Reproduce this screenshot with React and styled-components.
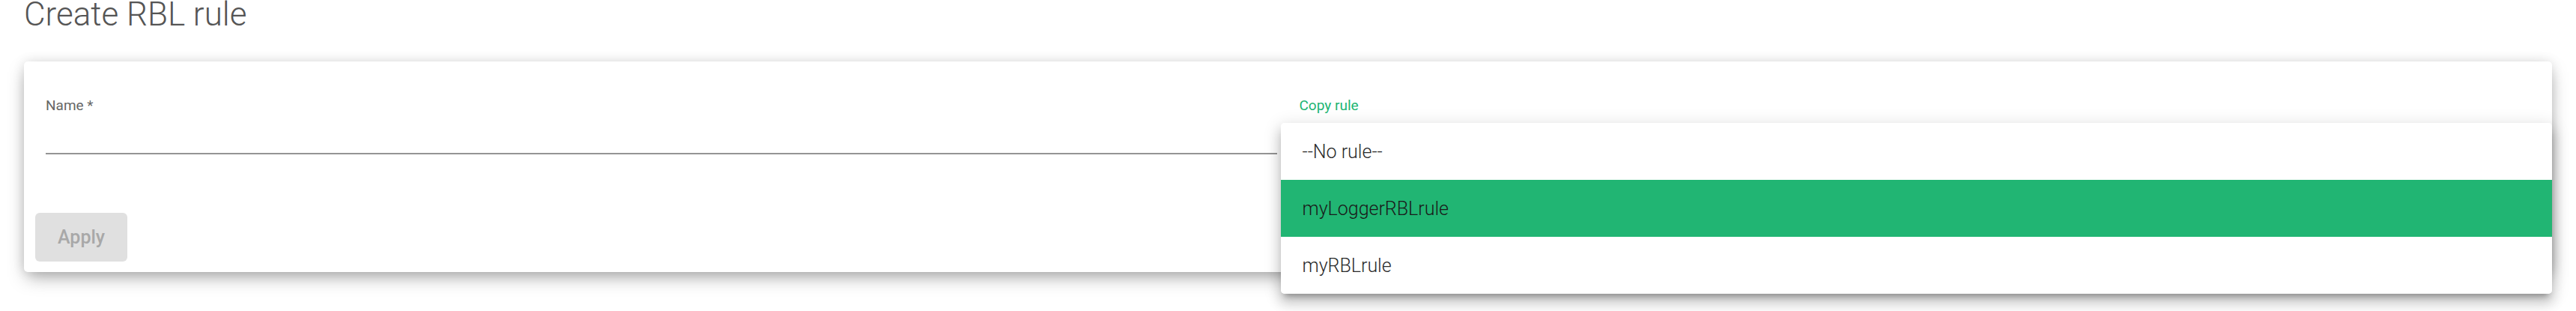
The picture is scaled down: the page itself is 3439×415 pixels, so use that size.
import styled, { createGlobalStyle } from "styled-components";

const GlobalStyle = createGlobalStyle`
  html, body {
    margin:0;
    padding:0;
    background:#fff;
    font-family:Roboto, "Liberation Sans", sans-serif;
  }
`;

const rules = ["--No rule--", "myLoggerRBLrule", "myRBLrule"];

function App() {
  const selected = 1;
  return (
    <Page>
      <GlobalStyle />
      <Title>Create RBL rule</Title>
      <Card>
        <Fields>
          <Field>
            <Label>Name *</Label>
            <Input />
          </Field>
          <Field>
            <Label $active>Copy rule</Label>
            <Input />
            {/* open select panel */}
            <Panel>
              {rules.map((item, idx) => (
                <Option key={idx} $selected={idx === selected}>
                  {item}
                </Option>
              ))}
            </Panel>
          </Field>
        </Fields>
        <Actions>
          <Button disabled>Apply</Button>
        </Actions>
      </Card>
    </Page>
  );
}
export default App;

const Page = styled.div`
  box-sizing:border-box;
  min-height:415px;
  padding:0 32px;
`;
const Title = styled.h1`
  margin:0;
  font-size:44px;
  font-weight:300;
  line-height:38px;
  color:#555;
`;
const Card = styled.div`
  margin-top:44px;
  border-radius:5px;
  background:#fff;
  box-shadow:0 10px 24px -4px rgba(0,0,0,.35), 0 0 16px rgba(0,0,0,.1);
`;
const Fields = styled.div`
  display:grid;
  grid-template-columns:1fr 1fr;
  gap:30px;
  padding:48px 29px 0;
`;
const Field = styled.div`
  position:relative;
  display:flex;
  flex-direction:column;
`;
const Label = styled.label`
  font-size:19px;
  line-height:22px;
  color:${(p) => (p.$active ? "#21b573" : "#666")};
`;
const Input = styled.div`
  height:52px;
  border-bottom:2px solid #949494;
`;
const Panel = styled.ul`
  position:absolute;
  z-index:10;
  top:34px;
  left:-25px;
  right:-29px;
  margin:0;
  padding:0;
  list-style:none;
  overflow:hidden;
  border-radius:5px;
  background:#fff;
  box-shadow:0 8px 8px -5px rgba(0,0,0,.3), 0 12px 16px 2px rgba(0,0,0,.14), 0 5px 22px 3px rgba(0,0,0,.12);
`;
const Option = styled.li`
  display:flex;
  align-items:center;
  height:76px;
  padding:0 29px;
  font-size:25px;
  font-weight:300;
  color:${(p) => (p.$selected ? "#1a1a1a" : "#2a2a2a")};
  background:${(p) => (p.$selected ? "#21b573" : "#fff")};
`;
const Actions = styled.div`
  display:flex;
  padding:78px 15px 14px;
`;
const Button = styled.button`
  height:65px;
  padding:0 30px;
  border:0;
  border-radius:6px;
  background:#e0e0e0;
  color:#a8a8a8;
  font-family:Roboto, "Liberation Sans", sans-serif;
  font-size:25px;
  font-weight:500;
`;
